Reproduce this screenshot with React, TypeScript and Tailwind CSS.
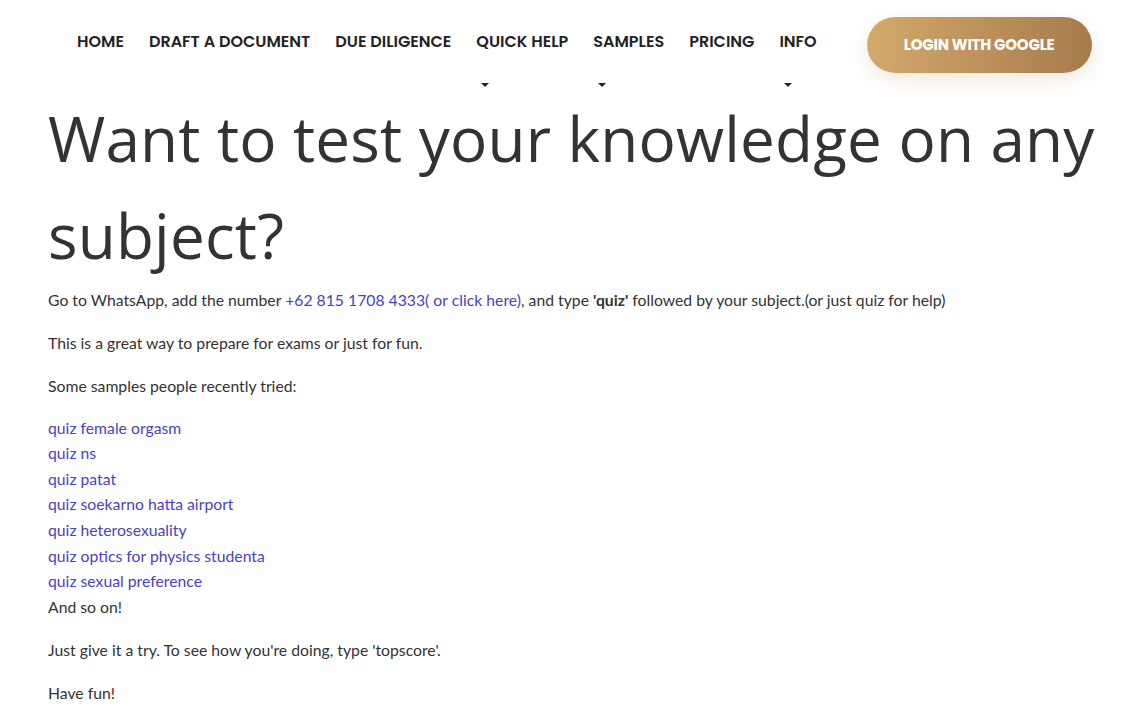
import React from 'react';

const navItems = [
  { label: 'HOME', caret: false },
  { label: 'DRAFT A DOCUMENT', caret: false },
  { label: 'DUE DILIGENCE', caret: false },
  { label: 'QUICK HELP', caret: true },
  { label: 'SAMPLES', caret: true },
  { label: 'PRICING', caret: false },
  { label: 'INFO', caret: true },
];

const samples = [
  'quiz female orgasm',
  'quiz ns',
  'quiz patat',
  'quiz soekarno hatta airport',
  'quiz heterosexuality',
  'quiz optics for physics studenta',
  'quiz sexual preference',
];

const Caret: React.FC = () => (
  <span className="absolute left-[5px] top-[51px] block h-0 w-0 border-x-[4px] border-t-[4px] border-x-transparent border-t-[#2a2216]" />
);

export default function App() {
  return (
    <div className="min-h-screen bg-white text-[#333]">
      <header className="flex h-[90px] items-start">
        <nav className="flex gap-[25px] pl-[77px] pt-[32px] font-['Poppins','Inter','Noto_Sans',sans-serif] text-[16px] font-semibold text-[#222]">
          {navItems.map(item => (
            <a key={item.label} href="#" className="relative leading-[20px]">
              {item.label}
              {item.caret && <Caret />}
            </a>
          ))}
        </nav>
        <button className="ml-[50px] mt-[17px] h-[56px] w-[225px] rounded-full bg-gradient-to-r from-[#d4a96b] to-[#a77b4c] font-['Poppins','Inter','Noto_Sans',sans-serif] text-[15px] font-bold tracking-[-0.2px] text-white shadow-[0_6px_18px_rgba(200,160,110,0.25)]">
          LOGIN WITH GOOGLE
        </button>
      </header>

      <main className="pl-[48px] pr-[20px] font-['Lato','Noto_Sans',sans-serif] text-[15.75px] leading-[25.5px]">
        <h1 className="mb-[3px] font-['Open_Sans','Noto_Sans',sans-serif] text-[62px] font-normal leading-[97px] tracking-[0.2px] text-[#333]">
          Want to test your knowledge on any subject?
        </h1>
        <p className="mb-[17.5px]">
          Go to WhatsApp, add the number{' '}
          <a href="#" className="text-[#4b3fc2]">+62 815 1708 4333( or click here)</a>, and type{' '}
          <strong className="font-bold">'quiz'</strong> followed by your subject.(or just quiz for help)
        </p>
        <p className="mb-[17.5px]">This is a great way to prepare for exams or just for fun.</p>
        <p className="mb-[16px]">Some samples people recently tried:</p>
        <div className="mb-[17.5px] leading-[25.65px]">
          {samples.map(s => (
            <div key={s}>
              <a href="#" className="text-[#4b3fc2]">{s}</a>
            </div>
          ))}
          <div>And so on!</div>
        </div>
        <p className="mb-[17.5px]">Just give it a try. To see how you're doing, type 'topscore'.</p>
        <p>Have fun!</p>
      </main>
    </div>
  );
}
